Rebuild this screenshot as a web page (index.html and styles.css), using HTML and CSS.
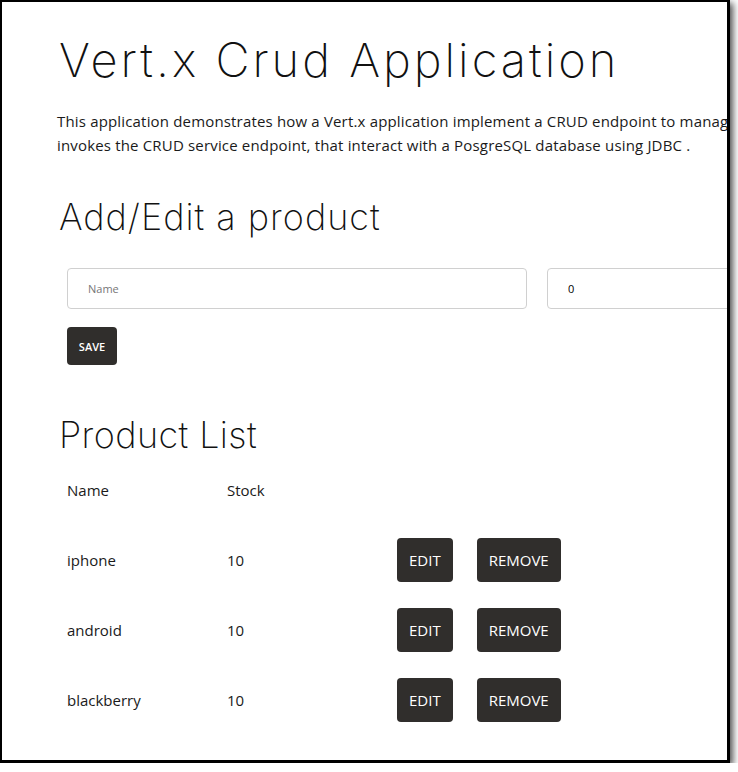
FILE: index.html
```html
<!DOCTYPE html>
<html>
<head>
<meta charset="utf-8">
<title>Vert.x Crud Application</title>
<link rel="stylesheet" href="styles.css">
</head>
<body>
<div class="frame">
  <div class="page">
    <h1 class="title">Vert.x Crud Application</h1>
    <p class="intro">This application demonstrates how a Vert.x application implement a CRUD endpoint to manage products. The UI is a simple AngularJS application that<br>invokes the CRUD service endpoint, that interact with a PosgreSQL database using JDBC .</p>

    <h2 class="section">Add/Edit a product</h2>
    <form class="form">
      <div class="fields">
        <input class="field field-name" type="text" placeholder="Name">
        <input class="field field-stock" type="text" value="0">
      </div>
      <button class="btn btn-save" type="button">SAVE</button>
    </form>

    <h2 class="section section-list">Product List</h2>
    <div class="table">
      <div class="row head">
        <div class="cell c-name">Name</div>
        <div class="cell c-stock">Stock</div>
        <div class="cell c-actions"></div>
      </div>
      <div class="row">
        <div class="cell c-name">iphone</div>
        <div class="cell c-stock">10</div>
        <div class="cell c-actions"><button class="btn btn-row btn-edit">EDIT</button><button class="btn btn-row btn-remove">REMOVE</button></div>
      </div>
      <div class="row">
        <div class="cell c-name">android</div>
        <div class="cell c-stock">10</div>
        <div class="cell c-actions"><button class="btn btn-row btn-edit">EDIT</button><button class="btn btn-row btn-remove">REMOVE</button></div>
      </div>
      <div class="row">
        <div class="cell c-name">blackberry</div>
        <div class="cell c-stock">10</div>
        <div class="cell c-actions"><button class="btn btn-row btn-edit">EDIT</button><button class="btn btn-row btn-remove">REMOVE</button></div>
      </div>
    </div>
  </div>
</div>
</body>
</html>
```

FILE: styles.css
```css
html, body {
  margin: 0;
  padding: 0;
  background: #ffffff;
}

.frame {
  width: 725px;
  height: 758px;
  border-style: solid;
  border-color: #000;
  border-width: 2px 3px 3px 2px;
  background: #fff;
  overflow: hidden;
  box-shadow: 3px 3px 7px rgba(0, 0, 0, 0.7);
}

.page {
  padding: 28px 0 0 55px;
  width: 1000px;
  font-family: "Open Sans", "Liberation Sans", sans-serif;
  color: #1a1a1a;
}

.title {
  margin: 0;
  font-family: "Inter", "Lato", sans-serif;
  font-weight: 200;
  font-size: 47px;
  line-height: 60px;
  letter-spacing: 3px;
  color: #111;
  padding-left: 2px;
}

.intro {
  margin: 19px 0 0;
  font-size: 15px;
  line-height: 24px;
  letter-spacing: 0.17px;
  white-space: nowrap;
}

.section {
  margin: 0;
  font-family: "Inter", "Lato", sans-serif;
  font-weight: 200;
  font-size: 36px;
  line-height: 48px;
  letter-spacing: 1px;
  color: #111;
  padding-left: 2px;
}

.intro + .section {
  margin-top: 36px;
}

.form {
  padding: 0 0 0 10px;
  margin-top: 27px;
}

.fields {
  display: flex;
  gap: 20px;
}

.field {
  box-sizing: border-box;
  height: 41px;
  border: 1px solid #d0d0d0;
  border-radius: 4px;
  padding: 0 20px;
  font-family: "Open Sans", "Liberation Sans", sans-serif;
  font-size: 11px;
  color: #000;
  outline: none;
}

.field::placeholder {
  color: #777;
}

.field-name {
  width: 460px;
}

.field-stock {
  width: 460px;
}

.btn {
  border: 0;
  background: #302e2c;
  color: #fff;
  font-family: "Open Sans", "Liberation Sans", sans-serif;
  border-radius: 4px;
  cursor: pointer;
}

.btn-save {
  margin-top: 18px;
  width: 50px;
  height: 38px;
  font-size: 11px;
  font-weight: 600;
  padding: 0;
}

.section-list {
  margin-top: 50px;
  line-height: 40px;
  letter-spacing: 0.4px;
}

.table {
  margin-top: 0;
  padding-left: 10px;
}

.row {
  display: grid;
  grid-template-columns: 160px 170px auto;
  align-items: center;
  height: 70px;
  font-size: 15px;
}

.c-actions {
  display: flex;
  gap: 24px;
}

.btn-row {
  height: 44px;
  font-size: 15px;
  padding: 0 12px;
}
```
